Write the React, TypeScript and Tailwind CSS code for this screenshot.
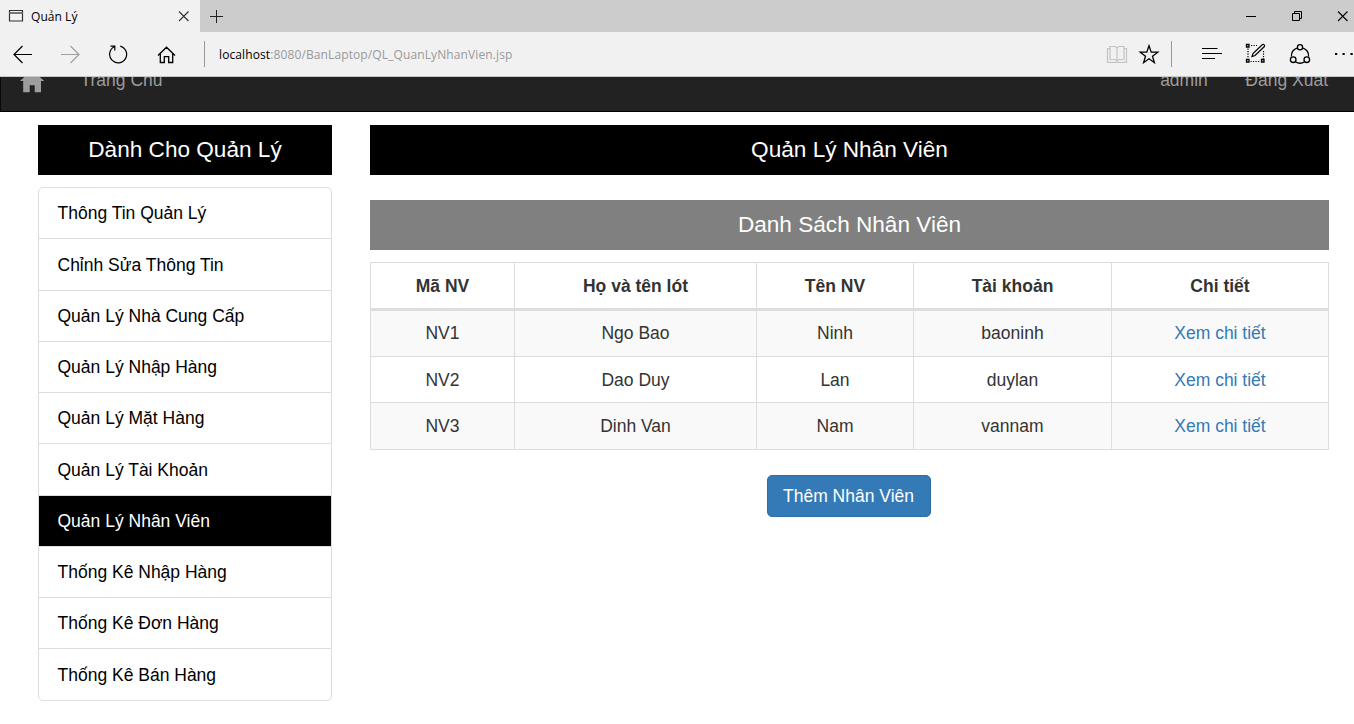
import type { ReactNode } from "react";

const menuItems = [
  "Thông Tin Quản Lý",
  "Chỉnh Sửa Thông Tin",
  "Quản Lý Nhà Cung Cấp",
  "Quản Lý Nhập Hàng",
  "Quản Lý Mặt Hàng",
  "Quản Lý Tài Khoản",
  "Quản Lý Nhân Viên",
  "Thống Kê Nhập Hàng",
  "Thống Kê Đơn Hàng",
  "Thống Kê Bán Hàng",
];

const employees = [
  ["NV1", "Ngo Bao", "Ninh", "baoninh"],
  ["NV2", "Dao Duy", "Lan", "duylan"],
  ["NV3", "Dinh Van", "Nam", "vannam"],
];

const headers = ["Mã NV", "Họ và tên lót", "Tên NV", "Tài khoản", "Chi tiết"];

/* Each icon is drawn in window coordinates; x and w give its slot in the bar. */
function BarIcon({
  x,
  y = 32,
  w,
  h = 44,
  className,
  children,
}: {
  x: number;
  y?: number;
  w: number;
  h?: number;
  className?: string;
  children: ReactNode;
}) {
  return (
    <svg
      width={w}
      height={h}
      viewBox={`${x} ${y} ${w} ${h}`}
      fill="none"
      stroke="#000"
      strokeWidth="1.2"
      className={`shrink-0 ${className ?? ""}`}
    >
      {children}
    </svg>
  );
}

function TabStrip() {
  return (
    <div className="flex h-8 bg-[#cccccc]">
      <div className="flex w-[200px] bg-[#f1f1f1]">
        <BarIcon x={8} y={0} w={16} h={32} className="ml-2">
          <path d="M9.500 10.500h13v10.500h-13z" stroke="#333" />
          <path d="M9.500 13h13" stroke="#777" strokeWidth="2" />
        </BarIcon>
        <span className="ml-[7px] pt-px text-[12px] leading-[31px] tracking-[0.05px] whitespace-nowrap text-black">
          Quản Lý
        </span>
        <BarIcon x={176} y={0} w={16} h={32} className="mr-2 ml-auto">
          <path d="M179 11.500l9.500 9.500M188.500 11.500l-9.500 9.500" stroke="#333" strokeWidth="1.100" />
        </BarIcon>
      </div>
      <BarIcon x={208} y={0} w={16} h={32} className="ml-2">
        <path d="M210 16.500h13M216.500 10v13" stroke="#222" strokeWidth="1" />
      </BarIcon>
      <BarIcon x={1244} y={0} w={14} h={32} className="ml-auto">
        <path d="M1246 16.500h10" strokeWidth="1" />
      </BarIcon>
      <BarIcon x={1290} y={0} w={14} h={32} className="ml-8">
        <path d="M1292.500 13.500h7v7h-7zM1294.500 13v-1.500h7v7h-1.500" strokeWidth="1" />
      </BarIcon>
      <BarIcon x={1336} y={0} w={14} h={32} className="mr-1 ml-8">
        <path d="M1338 11.500l9.500 9.500M1347.500 11.500l-9.500 9.500" strokeWidth="1.100" />
      </BarIcon>
    </div>
  );
}

function Toolbar() {
  return (
    <div className="flex h-[45px] border-b border-[#c6c8c8] bg-[#f1f1f1]">
      <BarIcon x={12} w={21} className="ml-3">
        <path d="M32 54.500H14M22.500 46L14 54.500l8.500 8.500" />
      </BarIcon>
      <BarIcon x={60} w={21} className="ml-[27px]">
        <path d="M61 54.500h18M70.500 46l8.500 8.500-8.500 8.500" stroke="#a0a0a0" />
      </BarIcon>
      <BarIcon x={108} w={20} className="ml-[27px]">
        <path d="M120.200 46.100A8.500 8.500 0 1 1 114.200 46.800M110.500 46.200h4.300v4.300" />
      </BarIcon>
      <BarIcon x={157} w={19} className="ml-[29px]">
        <path d="M158 55.500l8.500-8.300 8.500 8.300M160.300 53.500v9h4v-5.800h4.400v5.800h4v-9" strokeWidth="1.300" />
      </BarIcon>
      <BarIcon x={203} w={3} className="ml-[27px]">
        <path d="M204.500 41v26" stroke="#999" strokeWidth="1" />
      </BarIcon>
      <span className="ml-[13px] text-[12px] leading-[45px] tracking-[0.110px] whitespace-nowrap text-[#999999]">
        <span className="text-black">localhost</span>:8080/BanLaptop/QL_QuanLyNhanVien.jsp
      </span>
      <BarIcon x={1106} w={22} className="ml-auto">
        <path
          d="M1110 59.500v-13h5l2 1.200 2-1.200h5v13h-5l-2 1.200-2-1.200zM1117 47.500v14M1110 48.500h-2.500v13.800h19v-13.800h-2.500"
          stroke="#c4c4c4"
        />
      </BarIcon>
      <BarIcon x={1138} w={22} className="ml-[10px]">
        <path
          d="M1149 45.800l2.200 6.300 6.600.1-5.300 4 1.900 6.500-5.400-3.900-5.400 3.900 1.900-6.500-5.300-4 6.600-.1z"
          strokeWidth="1.300"
        />
      </BarIcon>
      <BarIcon x={1170} w={3} className="ml-[10px]">
        <path d="M1171.500 41v26" stroke="#999" strokeWidth="1" />
      </BarIcon>
      <BarIcon x={1201} w={22} className="ml-7">
        <path d="M1202 48.500h15.500M1202 53.500h20M1202 58.500h13" />
      </BarIcon>
      <BarIcon x={1244} w={24} className="ml-[21px]">
        <path d="M1251 45.500h6M1248 48.500v10M1250.500 61.500h10M1263.500 51v8" strokeWidth="1.200" strokeDasharray="1.200 1.300" />
        <path d="M1246.500 44.500h2.500v2.500h-2.500zM1246.500 59.500h2.500v2.500h-2.500zM1261.500 59.500h2.500v2.500h-2.500z" strokeWidth="1.300" />
        <path d="M1252 56.500l1-3 9.200-8.700c1.500-1 3.200.5 2 2l-9.200 8.700z" />
      </BarIcon>
      <BarIcon x={1288} w={24} className="ml-5">
        <path d="M1296.900 48.200a8.500 8.500 0 0 0-5.500 8.200M1303.100 48.200a8.500 8.500 0 0 1 5.500 8.200M1295.300 61.700a8.500 8.500 0 0 0 9.400 0" strokeWidth="1.300" />
        <circle cx="1300" cy="47.200" r="2.600" strokeWidth="1.300" />
        <circle cx="1293.200" cy="59.700" r="2.800" strokeWidth="1.300" />
        <circle cx="1306.800" cy="59.700" r="2.800" strokeWidth="1.300" />
      </BarIcon>
      <BarIcon x={1334} w={20} className="ml-[22px]">
        <path d="M1335 54h2.200M1342.500 54h2.200M1350.500 54h2.200" strokeWidth="2" />
      </BarIcon>
    </div>
  );
}

function SiteNav() {
  return (
    <nav className="flex h-[35px] items-start overflow-hidden border-b border-l border-b-black border-l-[#090909] bg-[#222222] text-[17.500px] leading-5 text-[#9d9d9d]">
      <svg width="24" height="16" viewBox="20 77 24 16" fill="#9d9d9d" className="ml-[19px] shrink-0">
        <path d="M32 70l12.300 11h-3.300v11.300h-6.300v-7h-5v7h-6.500V81H20z" />
      </svg>
      <span className="-mt-[7px] ml-[36.500px]">Trang Chủ</span>
      <span className="-mt-[7px] ml-auto">admin</span>
      <span className="-mt-[7px] mr-[26px] ml-[37.500px]">Đăng Xuất</span>
    </nav>
  );
}

function Banner({ tone, children }: { tone: string; children: ReactNode }) {
  return (
    <h2 className={`h-[50px] text-center text-[22.600px] leading-[49px] text-white ${tone}`}>{children}</h2>
  );
}

function SideMenu() {
  return (
    <aside className="w-[294px] shrink-0">
      <Banner tone="bg-black">Dành Cho Quản Lý</Banner>
      <ul className="mt-3 h-[514px] rounded-[5px] border border-[#dddddd]">
        {menuItems.map((item, i) => (
          <li
            key={item}
            className={`flex h-[51.250px] items-center pt-[1.500px] pl-[18.500px] ${
              i === 6 ? "bg-black text-white" : "text-black"
            } ${i === menuItems.length - 1 ? "" : "border-b border-[#dddddd]"}`}
          >
            {item}
          </li>
        ))}
      </ul>
    </aside>
  );
}

const columns = "grid grid-cols-[144px_242px_157px_198px_218px]";
const cell = "flex items-center justify-center border-l border-[#dddddd] last:border-r";

function EmployeeTable() {
  return (
    <div role="table" className="mt-3 border-t border-[#dddddd] text-[#333333]">
      <div role="row" className={`${columns} h-12 border-b-[3px] border-[#dddddd] font-bold`}>
        {headers.map((h) => (
          <div role="columnheader" key={h} className={`${cell} pt-px`}>
            {h}
          </div>
        ))}
      </div>
      {employees.map((row, i) => (
        <div
          role="row"
          key={row[0]}
          className={`${columns} border-b border-[#dddddd] ${
            ["h-[46px] bg-[#f9f9f9]", "h-[46px] bg-white *:pt-px", "h-[47px] bg-[#f9f9f9]"][i]
          }`}
        >
          {row.map((value) => (
            <div role="cell" key={value} className={cell}>
              {value}
            </div>
          ))}
          <div role="cell" className={`${cell} text-[#337ab7]`}>
            <a>Xem chi tiết</a>
          </div>
        </div>
      ))}
    </div>
  );
}

export default function App() {
  return (
    <div className="h-[724px] w-[1354px] overflow-hidden bg-white font-['Liberation_Sans',Arial,sans-serif] text-[17.500px] leading-[25px]">
      <header className="font-['Open_Sans','Noto_Sans',sans-serif]">
        <TabStrip />
        <Toolbar />
      </header>
      <SiteNav />
      <main className="flex gap-[38px] pt-[13px] pl-[38px]">
        <SideMenu />
        <section className="w-[959px]">
          <Banner tone="bg-black">Quản Lý Nhân Viên</Banner>
          <div className="mt-[25px]">
            <Banner tone="bg-[#808080]">Danh Sách Nhân Viên</Banner>
          </div>
          <EmployeeTable />
          <div className="mt-[25px] flex justify-center pr-0.5">
            <button className="h-[42px] w-[164px] rounded-[5px] border border-[#2e6da4] bg-[#337ab7] text-white">
              Thêm Nhân Viên
            </button>
          </div>
        </section>
      </main>
    </div>
  );
}
